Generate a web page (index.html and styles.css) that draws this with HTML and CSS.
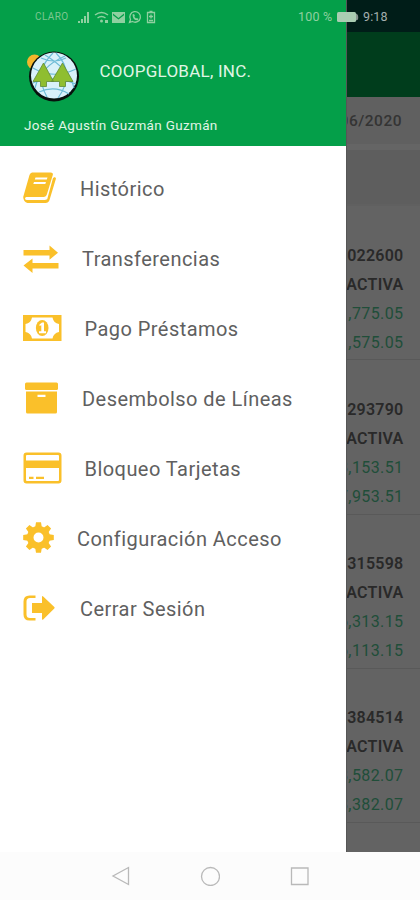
FILE: index.html
```html
<!DOCTYPE html>
<html lang="es">
<head>
<meta charset="utf-8">
<title>COOPGLOBAL</title>
<link rel="stylesheet" href="styles.css">
</head>
<body>
<div class="phone">
  <div class="status">
    <span class="carrier">CLARO</span>
    <svg class="status-icons" width="80" height="16" viewBox="0 0 80 16" fill="currentColor">
      <path d="M1 14v-2h2v2zM4 14v-4h2v4zM7 14V7h2v7zM10 14V3h2v11z"/>
      <g fill="none" stroke="currentColor" stroke-width="1.5"><path d="M18 6q6.500-5 13 0M20.500 9q4-3 8 0"/></g>
      <circle cx="24.500" cy="12" r="1.500"/><path d="M28 11h3v3h-3z"/>
      <path fill-rule="evenodd" d="M35 3h13v11H35zM36 4.500l5.500 4.500 5.500-4.500v1.800L41.500 10.500 36 6.300z"/>
      <path fill="none" stroke="currentColor" stroke-width="1.300" d="M52.500 13.500l1-3a5.300 5.300 0 1 1 2 2z"/>
      <path d="M55.500 5.500l1.500-.5 1 2-.8.8 1.800 1.800 1-.7 1.500 1-.6 1.400q-5 .5-5.400-5.800z"/>
      <path fill="none" stroke="currentColor" stroke-width="1.300" d="M70.500 3.500h7v10h-7zM72.500 2.500h3M74 5.500v4M72 7.500h4M72 11.500h4"/>
    </svg>
    <span class="percent">100 %</span>
    <svg class="battery" width="22" height="10" viewBox="0 0 22 10"><rect width="19" height="10" rx="1.500" fill="#a9cdb2"/><path d="M19 1.500q3 1 2 6l-2 1z" fill="#879490"/></svg>
    <span class="time">9:18</span>
  </div>

  <div class="screen">
    <aside class="drawer">
      <header class="profile">
        <div class="brand">
          <svg class="logo" width="56" height="54" viewBox="0 0 56 54">
            <circle cx="9.500" cy="12" r="7.500" fill="#f3b62c"/>
            <circle cx="29" cy="26.500" r="25" fill="#07110d"/>
            <circle cx="29" cy="25.500" r="23" fill="#d9f1fa"/>
            <g fill="none" stroke="#6dbbd6" stroke-width="1.200">
              <path d="M16 8q13 6 25 0M8 18q20 12 43 1M8 33q18-9 43 1M14 42q16-7 30 2M28 3Q8 22 22 47M31 3q20 20 2 45M20 5q25 15 29 33M40 6Q15 17 10 38"/>
            </g>
            <path d="M18.500 13l10 18.500h-7v5h-6v-5H8zM37.500 13L48 31.500h-7.500v5h-6v-5h-8z" fill="#8fbe30" stroke="#5f8a35" stroke-width=".8"/>
          </svg>
          <span class="brand-name">COOPGLOBAL, INC.</span>
        </div>
        <div class="user">José Agustín Guzmán Guzmán</div>
      </header>
      <nav class="menu">
        <a class="item">
          <svg class="icon" width="34" height="34" viewBox="0 0 34 34"><path d="M9 1.500h18.500q3 0 2.300 2.500L24 23q-.8 3-3.500 3H4Q2 25.500 2 28q.7 1 2 1h18l2.200-.8L30 7l2-1 1 1.500-6.500 21.500Q25.500 32 22.500 32H4.500Q.5 31 .2 26L6.500 4Q7 2 9 1.500z"/><path class="cut" d="M12.500 6.500h12l-.7 2h-12zM11 11h12l-.7 2h-12z"/></svg>
          <span class="label l1">Histórico</span>
        </a>
        <a class="item">
          <svg class="icon" width="36" height="34" viewBox="0 0 36 34"><path d="M.5 9h26V4.500l8.500 7.200-8.500 7V14.500H.5zM35.500 22H9.500v-4.500L.5 24.500l9 7.500v-4.500h26z"/></svg>
          <span class="label l2">Transferencias</span>
        </a>
        <a class="item">
          <svg class="icon" width="39" height="34" viewBox="0 0 39 34"><path fill-rule="evenodd" d="M0 4h38.500v26H0zM9 6.500Q8 12 2.500 13v8Q8 22 9 27.500h20.500Q30.500 22 36 21v-8Q30.500 12 29.500 6.500z"/><ellipse cx="19.200" cy="17" rx="6.300" ry="8"/><path class="cut" d="M16.500 13.500l2.500-2h2v8.800h2v2h-7v-2h2.300v-6l-1.800.8z"/></svg>
          <span class="label l3">Pago Préstamos</span>
        </a>
        <a class="item">
          <svg class="icon" width="36" height="34" viewBox="0 0 36 34"><rect x="2" y="1.500" width="33" height="7.500" rx="1.500"/><path fill-rule="evenodd" d="M3 10.500H34v20.500q0 1.500-1.500 1.500H4.500q-1.500 0-1.500-1.500zM14.500 13.800v2.300h8V13.800z"/></svg>
          <span class="label l4">Desembolso de Líneas</span>
        </a>
        <a class="item">
          <svg class="icon" width="39" height="34" viewBox="0 0 39 34"><path fill-rule="evenodd" d="M3.500 1.500h32q3 0 3 3v25q0 3-3 3h-32q-3 0-3-3v-25q0-3 3-3zM3 5v4.500H36V5q0-1-1-1H4q-1 0-1 1zM3 17v12q0 1 1 1H35q1 0 1-1V17z"/><path d="M6 25.700h4.500V28H6zM13 25.700h8V28h-8z"/></svg>
          <span class="label l5">Bloqueo Tarjetas</span>
        </a>
        <a class="item">
          <svg class="icon" width="31" height="34" viewBox="0 0 31 34"><g transform="translate(15.500 16.500)"><path d="M-2.500-15.300h5l1 6h-7zM-2.500 15.300h5l1-6h-7zM-15.300-2.500v5l6 1v-7zM15.300-2.500v5l-6 1v-7z"/><path transform="rotate(45)" d="M-2.500-15.300h5l1 6h-7zM-2.500 15.300h5l1-6h-7zM-15.300-2.500v5l6 1v-7zM15.300-2.500v5l-6 1v-7z"/><path fill-rule="evenodd" d="M-11.500 0a11.500 11.500 0 1 0 23 0a11.500 11.500 0 1 0-23 0zM-5 0a5 5 0 1 1 10 0a5 5 0 1 1-10 0z"/></g></svg>
          <span class="label l6">Configuración Acceso</span>
        </a>
        <a class="item">
          <svg class="icon" width="33" height="34" viewBox="0 0 33 34"><path d="M12.500 4.500H6.500q-6 0-6 6v13q0 6 6 6h6v-2.500H7q-3.500 0-3.500-3.500v-13q0-3.500 3.500-3.500h5.500zM9 12h10V6q0-1.500 1.200-.5L31.300 16q.8.700 0 1.500L20.200 28.500q-1.200 1-1.200-.7V22H9z"/></svg>
          <span class="label l7">Cerrar Sesión</span>
        </a>
      </nav>
    </aside>

    <main class="accounts">
      <div class="appbar-top"></div>
      <div class="appbar"></div>
      <div class="date">06/2020</div>
      <div class="section"></div>
      <section class="account"><b>022600</b><b>ACTIVA</b><span>,775.05</span><span>,575.05</span></section>
      <section class="account"><b>293790</b><b>ACTIVA</b><span>8,153.51</span><span>7,953.51</span></section>
      <section class="account"><b>315598</b><b>ACTIVA</b><span>6,313.15</span><span>6,113.15</span></section>
      <section class="account"><b>384514</b><b>ACTIVA</b><span>8,582.07</span><span>8,382.07</span></section>
    </main>
  </div>

  <footer class="navbar">
    <svg width="20" height="20" viewBox="0 0 20 20"><path d="M17.500 1.500v17L2 10z"/></svg>
    <svg width="20" height="20" viewBox="0 0 20 20"><circle cx="10.500" cy="10.500" r="9"/></svg>
    <svg width="20" height="20" viewBox="0 0 20 20"><path d="M1.500 2h16.500v16.500H1.500z"/></svg>
  </footer>
</div>
</body>
</html>
```
FILE: styles.css
```css
* { box-sizing: border-box; }
body { margin: 0; font-family: Roboto, "Liberation Sans", sans-serif; background: #fff; }
svg { display: block; flex: none; }
.phone { position: relative; width: 420px; height: 900px; display: flex; flex-direction: column; overflow: hidden; }

.status { position: absolute; z-index: 2; top: 0; left: 0; width: 420px; height: 32px; padding: 1px 0 0 35px; display: flex; align-items: center; color: #8fd0a0; white-space: nowrap; }
.carrier { width: 42px; font-size: 10px; letter-spacing: .4px; color: #7cc791; }
.percent { margin-left: 141px; width: 39px; font-size: 12.500px; letter-spacing: .2px; }
.battery { margin-right: 4px; }
.time { font-size: 12.500px; letter-spacing: .1px; color: #a4b0ae; }

.screen { display: grid; grid-template-columns: 346px 74px; height: 852px; }
.drawer { background: #fff; overflow: hidden; }
.profile { height: 146px; background: #049f49; color: #e0f5e5; padding: 50px 0 0 25px; white-space: nowrap; }
.brand { display: flex; align-items: center; height: 54px; gap: 18.500px; }
.brand-name { font-size: 17px; letter-spacing: .25px; padding-bottom: 12px; }
.user { margin-top: 12px; line-height: 18px; font-size: 13.500px; letter-spacing: .32px; margin-left: -1px; }

.menu { padding-top: 7px; }
.item { display: flex; align-items: center; height: 70px; padding-left: 23px; color: #606060; font-size: 20px; white-space: nowrap; }
.icon { fill: #fac02a; }
.cut { fill: #fff; }
.label { padding-top: 2px; letter-spacing: .45px; }
.l1 { margin-left: 23px; }
.l2 { margin-left: 23px; }
.l3 { margin-left: 22.500px; }
.l4 { margin-left: 23px; }
.l5 { margin-left: 22.500px; }
.l6 { margin-left: 23px; }
.l7 { margin-left: 24px; }

.accounts { background: #636363; overflow: hidden; border-left: 1px solid #565656; }
.appbar-top { height: 32px; background: #001d18; margin-left: -1px; }
.appbar { height: 65px; background: #003d1c; margin-left: -1px; }
.date { height: 47px; display: flex; align-items: center; justify-content: flex-end; padding: 1px 18px 0 0; font-size: 15.500px; font-weight: 500; letter-spacing: .5px; color: #343434; background: #606060; }
.section { height: 62px; border-top: 6px solid #656565; border-bottom: 2px solid #606060; background: #5e5e5e; }
.account { height: 154.300px; padding: 34.500px 16.500px 0 0; border-bottom: 1px solid #595959; display: flex; flex-direction: column; align-items: flex-end; font-size: 16px; line-height: 29px; letter-spacing: .4px; color: #204e39; }
.account b { font-weight: 600; color: #292929; letter-spacing: .25px; }

.navbar { height: 48px; background: #fcfcfc; display: flex; align-items: center; justify-content: center; gap: 69.500px; }
.navbar svg { fill: none; stroke: #b9b9b9; stroke-width: 1.300; }
```
